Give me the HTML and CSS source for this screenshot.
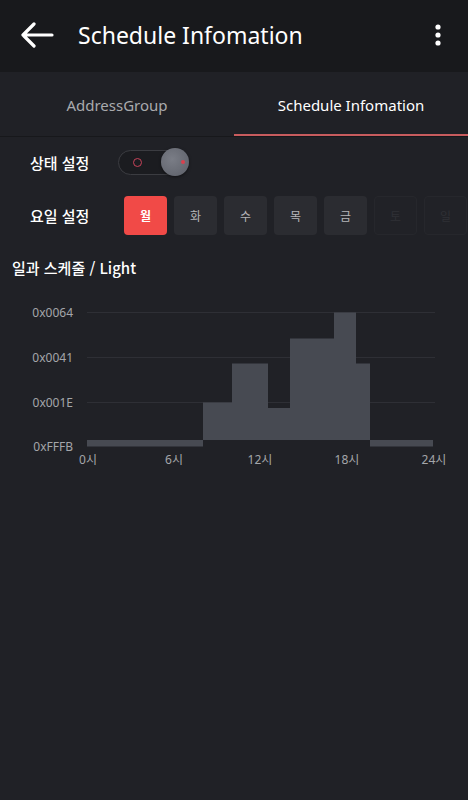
FILE: index.html
```html
<!DOCTYPE html>
<html lang="ko">
<head>
<meta charset="utf-8">
<link rel="stylesheet" href="styles.css">
</head>
<body>
<header class="appbar">
  <svg class="back" width="34" height="26" viewBox="0 0 34 26"><path d="M32 13H3M14 2L3 13l11 11" fill="none" stroke="#fff" stroke-width="3.2" stroke-linecap="round" stroke-linejoin="round"/></svg>
  <h1 class="title">Schedule Infomation</h1>
  <svg class="kebab" width="8" height="24" viewBox="0 0 8 24"><circle cx="4" cy="4" r="2.6" fill="#fff"/><circle cx="4" cy="12" r="2.6" fill="#fff"/><circle cx="4" cy="20" r="2.6" fill="#fff"/></svg>
</header>
<nav class="tabs">
  <div class="tab">AddressGroup</div>
  <div class="tab active">Schedule Infomation</div>
</nav>
<main class="content">
  <div class="row row-state">
    <span class="label">상태 설정</span>
    <div class="toggle">
      <span class="ring"></span>
      <span class="knob"><span class="knob-dot"></span></span>
    </div>
  </div>
  <div class="row row-days">
    <span class="label">요일 설정</span>
    <div class="days">
      <span class="day on">월</span>
      <span class="day">화</span>
      <span class="day">수</span>
      <span class="day">목</span>
      <span class="day">금</span>
      <span class="day off">토</span>
      <span class="day off">일</span>
    </div>
  </div>
  <h2 class="chart-title">일과 스케줄 / Light</h2>
  <svg class="chart" width="468" height="180" viewBox="0 295 468 180">
    <g class="grid">
      <line x1="87" y1="312.5" x2="435" y2="312.5"/>
      <line x1="87" y1="357.5" x2="435" y2="357.5"/>
      <line x1="87" y1="402.5" x2="435" y2="402.5"/>
    </g>
    <g class="ylab" text-anchor="end">
      <text x="73" y="317">0x0064</text>
      <text x="73" y="362">0x0041</text>
      <text x="73" y="407">0x001E</text>
      <text x="73" y="451">0xFFFB</text>
    </g>
    <g class="bars">
      <rect x="87" y="440" width="116" height="6.5"/>
      <rect x="203" y="402.5" width="29" height="37.5"/>
      <rect x="232" y="363.5" width="36" height="76.5"/>
      <rect x="268" y="408" width="22" height="32"/>
      <rect x="290" y="338.5" width="44" height="101.5"/>
      <rect x="334" y="312.5" width="22" height="127.5"/>
      <rect x="356" y="363.5" width="14" height="76.5"/>
      <rect x="370" y="440" width="63" height="6.5"/>
    </g>
    <g class="xlab" text-anchor="middle">
      <text x="88" y="464">0시</text>
      <text x="174" y="464">6시</text>
      <text x="260" y="464">12시</text>
      <text x="347" y="464">18시</text>
      <text x="434" y="464">24시</text>
    </g>
  </svg>
</main>
</body>
</html>
```
FILE: styles.css
```css
* { box-sizing: border-box; }
html, body { margin: 0; padding: 0; }
body {
  width: 468px;
  height: 800px;
  background: #202126;
  color: #fff;
  font-family: "Noto Sans", "Noto Sans CJK KR", sans-serif;
  overflow: hidden;
}
.appbar {
  height: 72px;
  background: #18191c;
  display: flex;
  align-items: center;
  padding: 0 0 0 20px;
}
.back { display: block; margin-top: -2px; }
.title {
  margin: 0 0 0 24px;
  font-size: 23px;
  font-weight: 400;
  letter-spacing: 0;
  flex: 1;
  margin-top: -2px;
}
.kebab { margin-right: 26px; margin-top: -2px; }
.tabs {
  height: 65px;
  display: flex;
  border-bottom: 1px solid #17181b;
}
.tab {
  flex: 1;
  display: flex;
  align-items: center;
  justify-content: center;
  font-size: 15px;
  color: #a9aaad;
  padding-top: 1px;
}
.tab.active {
  color: #fff;
  border-bottom: 2px solid #c85c5e;
  padding-top: 3px;
}
.content { padding: 0; }
.row {
  display: flex;
  align-items: center;
}
.label {
  flex: none;
  font-family: "Noto Sans CJK KR", sans-serif;
  font-size: 15px;
  font-weight: 500;
  width: 88px;
  margin-left: 30px;
}
.row-state { height: 50px; }
.toggle {
  position: relative;
  width: 68px;
  height: 25px;
  border-radius: 13px;
  border: 1px solid #3b3c41;
  background: #1b1c20;
}
.ring {
  position: absolute;
  left: 14px;
  top: 7px;
  width: 9px;
  height: 9px;
  border-radius: 50%;
  border: 1.5px solid #c8435a;
}
.knob {
  position: absolute;
  left: 42px;
  top: -3px;
  width: 28px;
  height: 28px;
  border-radius: 50%;
  background: radial-gradient(circle at 40% 40%, #7a7d86, #5c5f68);
  box-shadow: 0 1px 3px rgba(0,0,0,0.5);
}
.knob-dot {
  position: absolute;
  left: 20px;
  top: 12px;
  width: 4px;
  height: 4px;
  border-radius: 50%;
  background: #d8404e;
}
.row-days { height: 56px; }
.row-days .label { width: 94px; }
.days { display: flex; gap: 7px; }
.day {
  width: 43px;
  height: 39px;
  border-radius: 4px;
  background: #2b2c31;
  display: flex;
  align-items: center;
  justify-content: center;
  font-family: "Noto Sans CJK KR", sans-serif;
  font-size: 12px;
  color: #b4b5b8;
}
.day.on {
  background: #f14a47;
  color: #fff;
  font-weight: 700;
}
.day.off {
  background: #212227;
  border: 1px solid #26272c;
  color: #2f3035;
}
.chart-title {
  margin: 14px 0 0 12px;
  font-family: "Noto Sans CJK KR", sans-serif;
  font-size: 15px;
  font-weight: 500;
  height: 22px;
  line-height: 22px;
}
.chart { display: block; margin-top: 16px; }
.grid line { stroke: #2e2f35; stroke-width: 1; }
.bars rect { fill: #474a52; }
.ylab text, .xlab text {
  fill: #a4a6aa;
  font-family: "Noto Sans", "Noto Sans CJK KR", sans-serif;
  font-size: 12px;
}
```
